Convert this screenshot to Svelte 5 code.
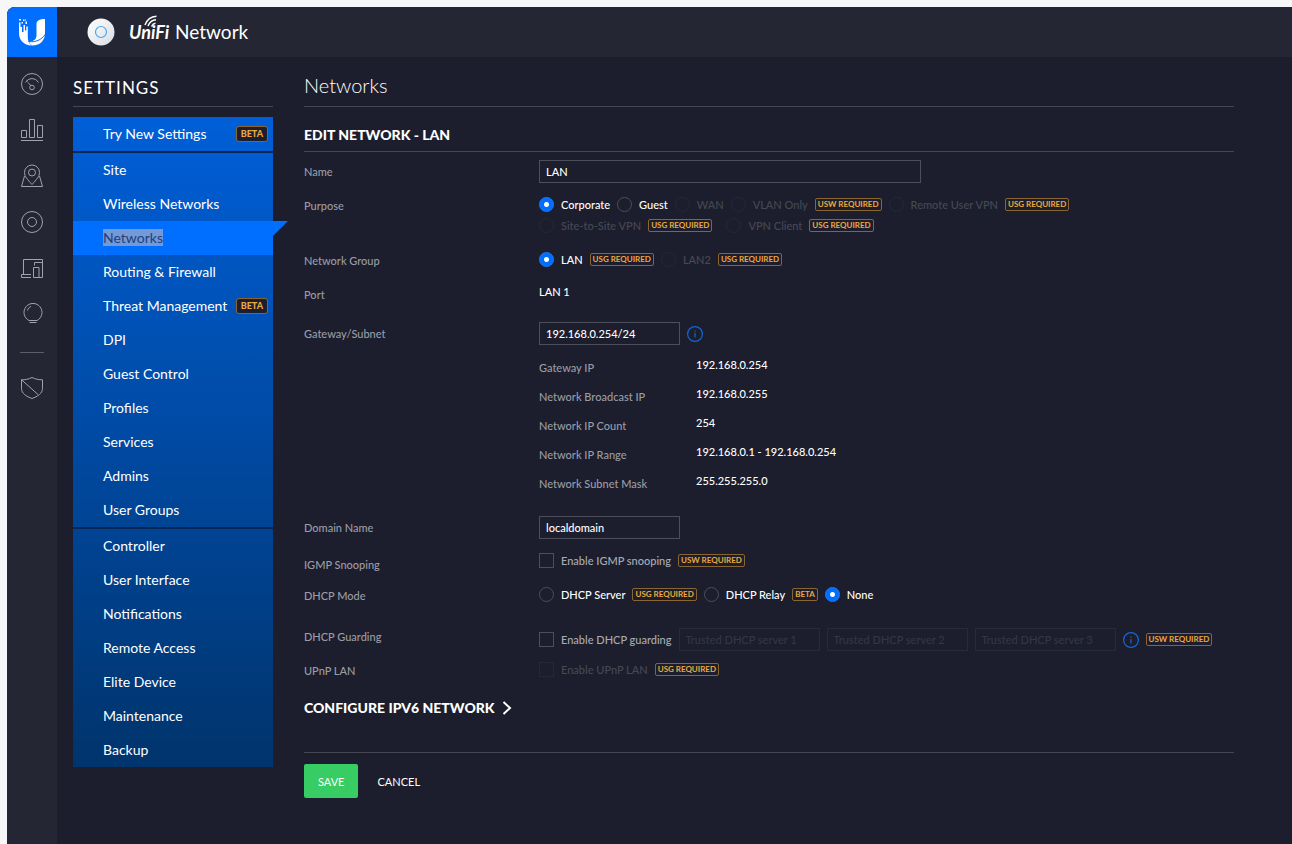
<script>
  const menuGroups = [
    [{ label: 'Try New Settings', beta: true }],
    [
      { label: 'Site' },
      { label: 'Wireless Networks' },
      { label: 'Networks' },
      { label: 'Routing & Firewall' },
      { label: 'Threat Management', beta: true },
      { label: 'DPI' },
      { label: 'Guest Control' },
      { label: 'Profiles' },
      { label: 'Services' },
      { label: 'Admins' },
      { label: 'User Groups' }
    ],
    [
      { label: 'Controller' },
      { label: 'User Interface' },
      { label: 'Notifications' },
      { label: 'Remote Access' },
      { label: 'Elite Device' },
      { label: 'Maintenance' },
      { label: 'Backup' }
    ]
  ];

  const purposeLines = [
    [
      { value: 'corporate', label: 'Corporate' },
      { value: 'guest', label: 'Guest' },
      { value: 'wan', label: 'WAN', disabled: true },
      { value: 'vlan-only', label: 'VLAN Only', disabled: true, badge: 'USW REQUIRED' },
      { value: 'remote-user-vpn', label: 'Remote User VPN', disabled: true, badge: 'USG REQUIRED' }
    ],
    [
      { value: 'site-vpn', label: 'Site-to-Site VPN', disabled: true, badge: 'USG REQUIRED' },
      { value: 'vpn-client', label: 'VPN Client', disabled: true, badge: 'USG REQUIRED' }
    ]
  ];

  const networkGroups = [
    { value: 'lan', label: 'LAN', badge: 'USG REQUIRED' },
    { value: 'lan2', label: 'LAN2', disabled: true, badge: 'USG REQUIRED' }
  ];

  const dhcpModes = [
    { value: 'server', label: 'DHCP Server', badge: 'USG REQUIRED' },
    { value: 'relay', label: 'DHCP Relay', badge: 'BETA' },
    { value: 'none', label: 'None' }
  ];

  const subnetInfo = [
    ['Gateway IP', '192.168.0.254'],
    ['Network Broadcast IP', '192.168.0.255'],
    ['Network IP Count', '254'],
    ['Network IP Range', '192.168.0.1 - 192.168.0.254'],
    ['Network Subnet Mask', '255.255.255.0']
  ];

  let activeItem = $state('Networks');
  let name = $state('LAN');
  let purpose = $state('corporate');
  let networkGroup = $state('lan');
  let subnet = $state('192.168.0.254/24');
  let domain = $state('localdomain');
  let igmpSnooping = $state(false);
  let dhcpMode = $state('none');
  let dhcpGuarding = $state(false);
  let trustedServers = $state(['', '', '']);
</script>

{#snippet infoIcon()}
  <svg class="info" width="16" height="16" viewBox="0 0 16 16" role="img" aria-label="More information">
    <circle cx="8" cy="8" r="7.4" />
    <path d="M8 7v4.5M8 4.6v1.2" />
  </svg>
{/snippet}

<div class="app">
  <header class="topbar">
    <a class="brand" href="#home" aria-label="Ubiquiti">
      <svg width="28" height="28" viewBox="0 0 28 28" fill="#fff">
        <path d="M1 4.500v10.500c0 7 4.500 12.300 13 12.500C10.800 25.500 9.800 23 9.800 19V8.500H8.300v4H7V7H5.500v7H4V9H2.500V4.500z" />
        <path d="M27 1c-5.500 0-8.500 1.500-8.500 5v11c0 3.500-1.500 6.300-7.500 6.500 .6 1.800 1.700 3.200 3.300 4C22.500 27.500 27 22 27 15z" />
        <path d="M1 1h2v1.500H1zM5 1.500h1.500V3H5zM7.500 3.500h1.500v2.500H7.500zM3.500 4H5v1.500H3.500zM7 1.500h1V2.500H7z" />
        <path d="M10.500 23.500c7 1 13-1.500 16.500-7" fill="none" stroke="#006fff" stroke-width="1" />
      </svg>
    </a>
    <svg class="device" width="28" height="28" viewBox="0 0 28 28">
      <defs>
        <linearGradient id="device-shade" x1="0" y1="0" x2="1" y2="1">
          <stop offset="0" stop-color="#fff" />
          <stop offset="1" stop-color="#d8dce2" />
        </linearGradient>
      </defs>
      <circle cx="14" cy="14" r="13.500" fill="url(#device-shade)" />
      <circle cx="14" cy="14" r="5.500" fill="none" stroke="#4fa6ee" stroke-width="1.200" />
    </svg>
    <div class="product">
      <span class="unifi">
        UniFi
        <svg width="16" height="12" viewBox="0 0 16 12">
          <path d="M1 10C3 4.500 7 1.500 12.500 1.200M4 11C5.500 7.500 8 5 12 4.800M7.500 11.500C8.500 9.500 9.500 8.500 11.500 8.300" />
        </svg>
      </span>
      <span>Network</span>
    </div>
  </header>

  <div class="body">
    <nav class="rail" aria-label="Main">
      <a href="#dashboard" aria-label="Dashboard">
        <svg width="24" height="24" viewBox="0 0 24 24">
          <circle cx="12" cy="12" r="10.500" />
          <path d="M5.500 10.500a7.300 7.300 0 0 1 13 0M6.500 8.200l1.300 1M8 10.500l3 3.300" />
          <circle cx="12" cy="15.500" r="2.300" />
        </svg>
      </a>
      <a href="#statistics" aria-label="Statistics">
        <svg width="24" height="24" viewBox="0 0 24 24">
          <path d="M1 22.500h22M1.500 12.500h5v7h-5zM9.500 1.500h5v18h-5zM17.500 7.500h5v12h-5z" />
        </svg>
      </a>
      <a href="#map" aria-label="Map">
        <svg width="24" height="24" viewBox="0 0 24 24">
          <path d="M12 20.500C7.500 15.500 4.500 12.500 4.500 8.500a7.500 7.500 0 0 1 15 0c0 4-3 7-7.500 12zM4.500 12L1.500 22.500h21L19.500 12" />
          <circle cx="12" cy="8.500" r="3.500" />
        </svg>
      </a>
      <a href="#devices" aria-label="Devices">
        <svg width="24" height="24" viewBox="0 0 24 24">
          <circle cx="12" cy="12" r="10.500" />
          <circle cx="12" cy="12" r="4.500" />
        </svg>
      </a>
      <a href="#clients" aria-label="Clients">
        <svg width="24" height="24" viewBox="0 0 24 24">
          <path d="M11 21.500H1.500v-3h9.500M3.500 18.500v-15h19v18h-3.500M14.500 9.500v-3h8M13.500 11.500h5.500v10h-5.500z" />
        </svg>
      </a>
      <a href="#insights" aria-label="Insights">
        <svg width="24" height="24" viewBox="0 0 24 24">
          <path d="M9 18.500a9 9 0 1 1 8 0zM9.500 20.500h7M7.500 8.500c.5-2 1.500-3.200 3.500-4" />
        </svg>
      </a>
      <hr />
      <a href="#security" aria-label="Security">
        <svg width="24" height="24" viewBox="0 0 24 24">
          <path d="M12 1.500c3.500 1.800 7 2.300 10.500 2.300v8.700c0 5-5 8-10.500 10C6.500 20.500 1.500 17.500 1.500 12.500V3.800C5 3.800 8.500 3.300 12 1.500zM1.500 3.800l16.500 14.700" />
        </svg>
      </a>
    </nav>

    <aside class="settings">
      <h2>Settings</h2>
      <nav class="menu" aria-label="Settings">
        {#each menuGroups as group}
          <ul>
            {#each group as item}
              <li class:active={item.label === activeItem}>
                <a href="#settings" onclick={() => (activeItem = item.label)}>
                  <span class="menu-label">{item.label}</span>
                  {#if item.beta}
                    <span class="badge beta">BETA</span>
                  {/if}
                </a>
              </li>
            {/each}
          </ul>
        {/each}
      </nav>
    </aside>

    <main>
      <h1>Networks</h1>
      <form onsubmit={(e) => e.preventDefault()}>
        <h3>Edit Network - LAN</h3>

        <div class="row">
          <label class="title" for="name">Name</label>
          <div><input id="name" class="text wide" type="text" bind:value={name} /></div>
        </div>

        <div class="row" role="radiogroup" aria-labelledby="purpose-title">
          <span class="title" id="purpose-title">Purpose</span>
          <div class="purpose">
            {#each purposeLines as line}
              <div class="options">
                {#each line as option}
                  <label class:disabled={option.disabled}>
                    <input type="radio" name="purpose" value={option.value} disabled={option.disabled} bind:group={purpose} />
                    {option.label}
                  </label>
                  {#if option.badge}<span class="badge">{option.badge}</span>{/if}
                {/each}
              </div>
            {/each}
          </div>
        </div>

        <div class="row" role="radiogroup" aria-labelledby="group-title">
          <span class="title" id="group-title">Network Group</span>
          <div class="options">
            {#each networkGroups as option}
              <label class:disabled={option.disabled}>
                <input type="radio" name="network-group" value={option.value} disabled={option.disabled} bind:group={networkGroup} />
                {option.label}
              </label>
              <span class="badge">{option.badge}</span>
            {/each}
          </div>
        </div>

        <div class="row port">
          <span class="title">Port</span>
          <div class="value">LAN 1</div>
        </div>

        <div class="row">
          <label class="title" for="subnet">Gateway/Subnet</label>
          <div>
            <div class="options">
              <input id="subnet" class="text" type="text" bind:value={subnet} />
              {@render infoIcon()}
            </div>
            <dl>
              {#each subnetInfo as [term, value]}
                <dt class="title">{term}</dt>
                <dd class="value">{value}</dd>
              {/each}
            </dl>
          </div>
        </div>

        <div class="row">
          <label class="title" for="domain">Domain Name</label>
          <div><input id="domain" class="text" type="text" bind:value={domain} /></div>
        </div>

        <div class="row">
          <span class="title low">IGMP Snooping</span>
          <div class="options">
            <label class="check">
              <input type="checkbox" bind:checked={igmpSnooping} />
              Enable IGMP snooping
            </label>
            <span class="badge">USW REQUIRED</span>
          </div>
        </div>

        <div class="row tall" role="radiogroup" aria-labelledby="dhcp-title">
          <span class="title" id="dhcp-title">DHCP Mode</span>
          <div class="options">
            {#each dhcpModes as option}
              <label>
                <input type="radio" name="dhcp-mode" value={option.value} bind:group={dhcpMode} />
                {option.label}
              </label>
              {#if option.badge}<span class="badge">{option.badge}</span>{/if}
            {/each}
          </div>
        </div>

        <div class="row">
          <span class="title">DHCP Guarding</span>
          <div class="options guarding">
            <label class="check">
              <input type="checkbox" bind:checked={dhcpGuarding} />
              Enable DHCP guarding
            </label>
            {#each trustedServers as server, i}
              <input
                class="text"
                type="text"
                placeholder="Trusted DHCP server {i + 1}"
                aria-label="Trusted DHCP server {i + 1}"
                disabled={!dhcpGuarding}
                bind:value={trustedServers[i]}
              />
            {/each}
            {@render infoIcon()}
            <span class="badge">USW REQUIRED</span>
          </div>
        </div>

        <div class="row">
          <span class="title">UPnP LAN</span>
          <div class="options">
            <label class="check disabled">
              <input type="checkbox" disabled />
              Enable UPnP LAN
            </label>
            <span class="badge">USG REQUIRED</span>
          </div>
        </div>

        <button class="expand" type="button">
          Configure IPv6 Network
          <svg width="10" height="14" viewBox="0 0 10 14"><path d="M1.500 1l6.500 6-6.500 6" /></svg>
        </button>

        <footer>
          <button class="save" type="submit">Save</button>
          <button class="cancel" type="button">Cancel</button>
        </footer>
      </form>
    </main>
  </div>
</div>

<style>
  :global(body) {
    margin: 0;
    background: #f7f7f7;
  }

  .app {
    display: flex;
    flex-direction: column;
    box-sizing: border-box;
    min-height: calc(100vh - 7px);
    margin: 7px 0 0 7px;
    border-radius: 8px 0 0 0;
    overflow: hidden;
    background: #1c1e2d;
    color: #fff;
    font-family: Lato, 'Liberation Sans', sans-serif;
    font-size: 11px;
  }

  .topbar {
    display: flex;
    align-items: center;
    height: 50px;
    background: #242633;
  }

  .brand {
    display: flex;
    align-items: center;
    justify-content: center;
    width: 50px;
    height: 50px;
    background: #006fff;
  }

  .device {
    margin: 0 14px 0 30px;
  }

  .product {
    display: flex;
    align-items: center;
    gap: 6px;
    font-size: 19px;
    line-height: 24px;
  }

  .unifi {
    position: relative;
    font-size: 18px;
    font-style: italic;
    font-weight: 700;
  }

  .unifi svg {
    position: absolute;
    top: -5px;
    left: 15px;
    fill: none;
    stroke: #fff;
    stroke-width: 1.5;
  }

  .body {
    display: flex;
    flex: 1;
  }

  .rail {
    flex: none;
    width: 50px;
    padding-top: 4px;
    background: #242633;
  }

  .rail a {
    display: flex;
    align-items: center;
    justify-content: center;
    height: 46px;
  }

  .rail svg {
    fill: none;
    stroke: #a0a2ad;
    stroke-width: 1;
  }

  .rail hr {
    width: 24px;
    margin: 15px auto 12px;
    border: 0;
    border-top: 1px solid #5c5e69;
  }

  .settings {
    flex: none;
    width: 200px;
    padding: 20px 0 0 16px;
  }

  h2 {
    margin: 0 0 10px;
    padding-bottom: 8px;
    border-bottom: 1px solid #454753;
    font-size: 17px;
    font-weight: 400;
    line-height: 21px;
    letter-spacing: 1px;
    text-transform: uppercase;
  }

  .menu {
    background: linear-gradient(#005fd8, #00346c);
  }

  .menu ul {
    margin: 0;
    padding: 0;
    list-style: none;
  }

  .menu ul + ul {
    border-top: 2px solid #0b2654;
  }

  .menu li {
    position: relative;
  }

  .menu li a {
    display: flex;
    align-items: center;
    justify-content: space-between;
    height: 34px;
    padding: 0 5px 0 30px;
    color: #fff;
    font-size: 14px;
    text-decoration: none;
    white-space: nowrap;
  }

  .menu-label {
    margin-bottom: 2px;
  }

  .menu .active {
    background: #006fff;
  }

  .menu .active::after {
    content: '';
    position: absolute;
    top: 0;
    left: 100%;
    border-top: 15px solid #006fff;
    border-right: 15px solid transparent;
  }

  .menu .active .menu-label {
    background: #7399d6;
    color: #22407a;
  }

  .badge {
    box-sizing: border-box;
    height: 13px;
    padding: 0 2px;
    border: 1px solid #8a6530;
    border-radius: 2px;
    color: #eda93c;
    font-size: 8px;
    font-weight: 700;
    line-height: 11px;
    white-space: nowrap;
  }

  .badge.beta {
    height: 16px;
    padding: 0 4px;
    background: #1c1e2d;
    border-radius: 3px;
    font-size: 9px;
    font-weight: 900;
    line-height: 14px;
  }

  main {
    flex: 1;
    min-width: 0;
    padding: 17px 58px 46px 31px;
  }

  h1 {
    margin: 0;
    padding-bottom: 10px;
    border-bottom: 1px solid #454753;
    font-size: 20px;
    font-weight: 300;
    line-height: 22px;
  }

  h3 {
    margin: 17px 0 8px;
    padding-bottom: 6px;
    border-bottom: 1px solid #454753;
    font-size: 14px;
    font-weight: 900;
    line-height: 21px;
    text-transform: uppercase;
  }

  .row {
    display: grid;
    grid-template-columns: 235px 1fr;
    align-items: start;
    min-height: 34px;
  }

  .row.port {
    min-height: 39px;
  }

  .row.tall {
    min-height: 41px;
  }

  .title {
    padding-top: 4px;
    color: #9a9ca6;
    font-weight: 500;
    line-height: 16px;
  }

  .title.low {
    padding-top: 7px;
  }

  .value {
    font-weight: 500;
    line-height: 18px;
  }

  .options {
    display: flex;
    flex-wrap: wrap;
    align-items: center;
    gap: 0 7px;
    min-height: 21px;
  }

  .purpose {
    padding-bottom: 13px;
  }

  .purpose .options:last-child label + .badge + label {
    margin-left: 7px;
  }

  .guarding {
    min-height: 29px;
  }

  .options label {
    display: flex;
    align-items: center;
    gap: 7px;
    font-weight: 500;
    line-height: 20px;
    white-space: nowrap;
  }

  .options label.check {
    color: #a9abb4;
  }

  .options label.disabled {
    color: #464854;
  }

  input[type='radio'],
  input[type='checkbox'] {
    appearance: none;
    flex: none;
    width: 15px;
    height: 15px;
    margin: 0;
    border: 1px solid #4c4e5a;
  }

  input[type='radio'] {
    border-radius: 50%;
  }

  input[type='radio']:checked {
    border-color: #1a7cff;
    background: radial-gradient(circle, #fff 2px, #006fff 3px);
  }

  input[type='checkbox']:checked {
    background: #006fff;
  }

  input[type='radio']:disabled,
  input[type='checkbox']:disabled {
    border-color: #262836;
  }

  .text {
    box-sizing: border-box;
    width: 141px;
    height: 23px;
    padding: 0 6px;
    border: 1px solid #4c4e5a;
    background: transparent;
    color: #fff;
    font-family: inherit;
    font-size: 11px;
    font-weight: 500;
  }

  .text.wide {
    width: 100%;
    max-width: 382px;
  }

  .text:disabled {
    border-color: #282a38;
  }

  .text::placeholder {
    color: #343643;
    opacity: 1;
  }

  .info {
    fill: none;
    stroke: #1566d6;
    stroke-width: 1.2;
  }

  dl {
    display: grid;
    grid-template-columns: 157px 1fr;
    grid-auto-rows: 29px;
    margin: 11px 0 15px;
  }

  dd {
    margin: 0;
  }

  .expand {
    display: flex;
    align-items: center;
    gap: 7px;
    margin: 4px 0 0;
    padding: 0;
    border: 0;
    background: none;
    color: #fff;
    font-family: inherit;
    font-size: 14px;
    font-weight: 900;
    line-height: 21px;
    text-transform: uppercase;
  }

  .expand svg {
    fill: none;
    stroke: #fff;
    stroke-width: 2;
  }

  footer {
    display: flex;
    align-items: center;
    margin-top: 34px;
    padding-top: 11px;
    border-top: 1px solid #454753;
  }

  footer button {
    height: 34px;
    border: 0;
    border-radius: 2px;
    background: none;
    color: #fff;
    font-family: inherit;
    font-size: 11px;
    text-transform: uppercase;
  }

  .save {
    padding: 0 14px;
    background: #38cc65;
  }

  .cancel {
    padding: 0 19px;
  }
</style>
